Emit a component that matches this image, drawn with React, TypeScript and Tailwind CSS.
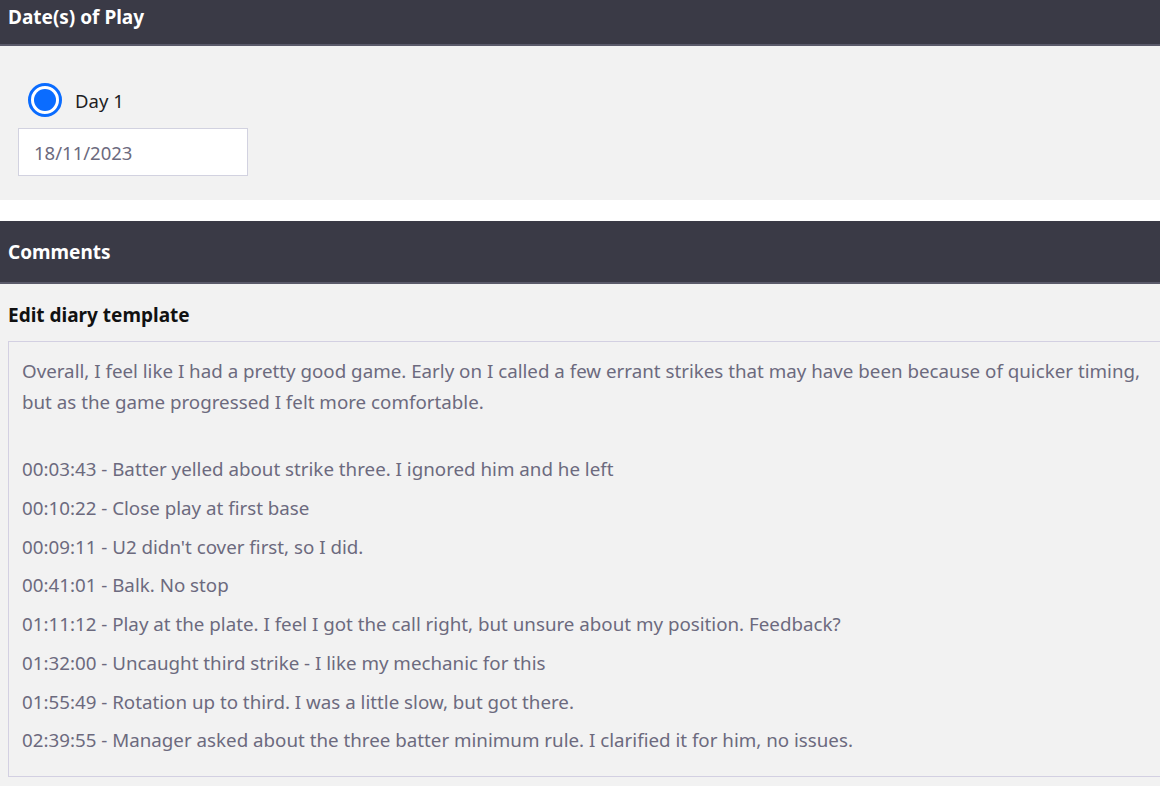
const LOG = [
  '00:03:43 - Batter yelled about strike three. I ignored him and he left',
  '00:10:22 - Close play at first base',
  "00:09:11 - U2 didn't cover first, so I did.",
  '00:41:01 - Balk. No stop',
  '01:11:12 - Play at the plate. I feel I got the call right, but unsure about my position. Feedback?',
  '01:32:00 - Uncaught third strike - I like my mechanic for this',
  '01:55:49 - Rotation up to third. I was a little slow, but got there.',
  '02:39:55 - Manager asked about the three batter minimum rule. I clarified it for him, no issues.',
];

function SectionHeader({ title, tall }: { title: string; tall?: boolean }) {
  return (
    <div
      className={`bg-[#3a3a46] border-b-2 border-[#5a5a6a] px-2 flex items-center ${tall ? 'h-[63px] pt-[1px]' : 'h-[46px] items-start pt-[5px]'}`}
    >
      <span className="text-white font-bold text-[19px] leading-6">{title}</span>
    </div>
  );
}

export default function App() {
  return (
    <div className="min-h-screen bg-white font-['Noto_Sans','Open_Sans',sans-serif] overflow-hidden">
      {/* DATES */}
      <SectionHeader title="Date(s) of Play" />
      <div className="bg-[#f2f2f2] h-[154px] pt-[37px] px-[18px]">
        <label className="flex items-center gap-[13px] pl-[10px]">
          <span className="w-[34px] h-[34px] rounded-full border-[3px] border-[#0a6cff] bg-white flex items-center justify-center">
            <span className="w-[22px] h-[22px] rounded-full bg-[#0a6cff]" />
          </span>
          <span className="text-[18.5px] text-[#1e1e24] pt-[1px]">Day 1</span>
        </label>
        <div className="mt-[11px] w-[230px] h-[48px] bg-white border border-[#d2d2e0] flex items-center px-[15px] pt-[2px] text-[18.5px] text-[#6c6a7e]">
          18/11/2023
        </div>
      </div>

      <div className="h-[21px]" />

      {/* COMMENTS */}
      <SectionHeader title="Comments" tall />
      <div className="bg-[#f2f2f2] pl-2 pt-[19px] pb-[9px] h-[502px]">
        <div className="text-[19px] font-bold text-[#111] leading-6">Edit diary template</div>
        <div className="mt-[14px] h-[436px] w-[1200px] border border-[#d3d0e2] pl-[13px] pt-[13px] text-[18.75px] leading-[31px] text-[#6c6a7e]">
          <p className="w-[1135px]">
            Overall, I feel like I had a pretty good game. Early on I called a few errant strikes that may have been because of quicker timing, but as the game progressed I felt more comfortable.
          </p>
          <div className="mt-[36px] flex flex-col gap-[7.75px]">
            {LOG.map((l) => (
              <p key={l}>{l}</p>
            ))}
          </div>
        </div>
      </div>
    </div>
  );
}
